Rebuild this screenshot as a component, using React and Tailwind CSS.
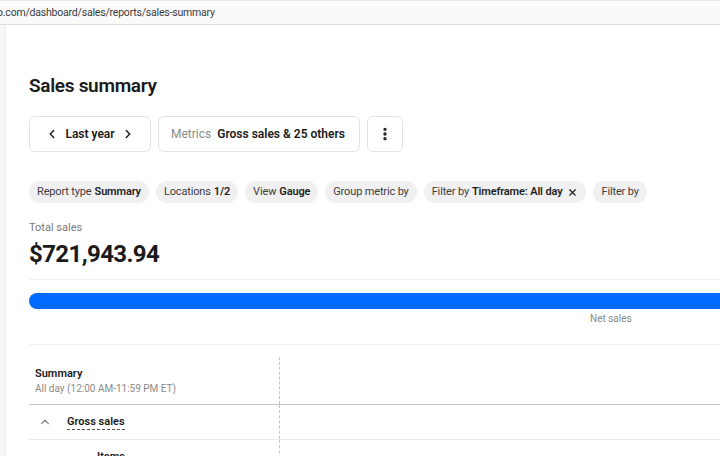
import { ChevronLeft, ChevronRight, ChevronUp, X, EllipsisVertical } from 'lucide-react';

const chips = [
  { label: "Report type", value: "Summary" },
  { label: "Locations", value: "1/2" },
  { label: "View", value: "Gauge" },
  { label: "Group metric by" },
  { label: "Filter by", value: "Timeframe: All day", removable: true },
  { label: "Filter by" },
];

const Chip = ({ label, value, removable }) => (
  <div className="flex items-center h-[22px] px-[8px] rounded-full bg-[#f0f0f0] text-[11px] tracking-[-0.15px] text-[#3d3d3d] whitespace-nowrap">
    <span>{label}</span>
    {value && <span className="ml-[3px] font-semibold text-[#1f1f1f]">{value}</span>}
    {removable && <X size={11} strokeWidth={2.5} className="ml-[5px] text-[#1f1f1f]" />}
  </div>
);

export default function App() {
  return (
    <div className="w-[720px] h-[456px] overflow-hidden bg-white font-['Roboto',sans-serif] text-[#1a1a1a]">
      {/* browser address bar */}
      <div className="h-[25px] bg-[#fafafa] border-t border-t-[#e8e8e8] border-b border-b-[#dcdcdc] flex items-center overflow-hidden">
        <span className="-ml-[3px] text-[10.5px] tracking-[-0.2px] text-[#3b3b3b] whitespace-nowrap">o.com/dashboard/sales/reports/sales-summary</span>
      </div>

      <div className="flex h-[431px]">
        <div className="w-[6px] shrink-0 bg-[#f7f7f7] border-r border-[#ececec]" />

        <div className="w-[960px] shrink-0 pl-[23px]">
          <h1 className="mt-[47px] text-[19px] leading-[28px] font-semibold tracking-[-0.3px]">Sales summary</h1>

          <div className="mt-4 flex gap-[7px]">
            <button className="h-9 w-[122px] flex items-center justify-between px-[15px] border border-[#e2e2e2] rounded-md text-[12px] font-semibold whitespace-nowrap">
              <ChevronLeft size={14} strokeWidth={2.5} />
              <span>Last year</span>
              <ChevronRight size={14} strokeWidth={2.5} />
            </button>
            <button className="h-9 w-[202px] flex items-center px-3 border border-[#e2e2e2] rounded-md text-[12px] whitespace-nowrap">
              <span className="text-[#8a8a8a]">Metrics</span>
              <span className="ml-[6px] font-semibold">Gross sales &amp; 25 others</span>
            </button>
            <button className="h-9 w-9 flex items-center justify-center border border-[#e2e2e2] rounded-md">
              <EllipsisVertical size={16} strokeWidth={3} />
            </button>
          </div>

          <div className="mt-[29px] flex gap-[7px]">
            {chips.map((c, i) => <Chip key={i} {...c} />)}
          </div>

          <div className="mt-[18px] text-[11px] leading-[14px] text-[#7a7a7a]">Total sales</div>
          <div className="mt-[4px] text-[24px] leading-[30px] font-bold tracking-[-0.6px]">$721,943.94</div>

          <div className="mt-[10px] border-t border-[#f0f0f0]" />

          <div className="mt-[13px] h-4 rounded-l-full bg-[#006aff]" />
          <div className="mt-[4px] text-[10px] leading-[12px] text-[#8a8a8a] pl-[561px]">Net sales</div>

          <div className="mt-[19px] border-t border-[#f0f0f0]" />

          <div className="mt-3">
            <div className="flex border-b border-[#c8c8c8]">
              <div className="w-[251px] shrink-0 border-r border-dashed border-[#c4c4c4] pl-[6px] pt-[10px] pb-[9px]">
                <div className="text-[11px] leading-[14px] font-semibold">Summary</div>
                <div className="mt-[1px] text-[10px] leading-[13px] text-[#8a8a8a]">All day (12:00 AM-11:59 PM ET)</div>
              </div>
            </div>

            <div className="flex border-b border-[#ececec]">
              <div className="w-[251px] h-[34px] shrink-0 flex items-center border-r border-dashed border-[#c4c4c4] pl-[9px]">
                <ChevronUp size={14} strokeWidth={2} className="text-[#8a8a8a]" />
                <span className="ml-[15px] text-[11px] font-semibold border-b border-dashed border-[#555] leading-[14px]">Gross sales</span>
              </div>
            </div>

            <div className="flex">
              <div className="w-[251px] h-[35px] shrink-0 border-r border-dashed border-[#c4c4c4] pl-[68px] pt-[9px] text-[11px] font-semibold">Items</div>
            </div>
          </div>
        </div>
      </div>
    </div>
  );
}
